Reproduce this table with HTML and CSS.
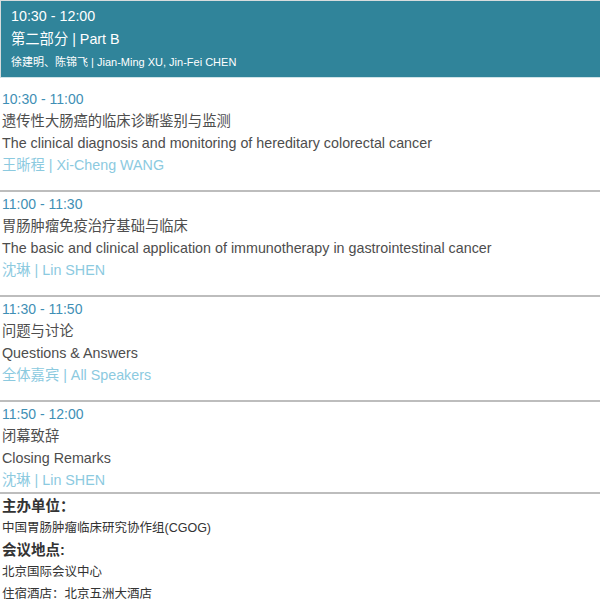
FILE: index.html
```html
<!DOCTYPE html>
<html>
<head>
<meta charset="utf-8">
<link rel="stylesheet" href="styles.css">
</head>
<body>
<div class="page">
  <div class="header">
    <div class="h-time">10:30 - 12:00</div>
    <div class="h-title">第二部分 | Part B</div>
    <div class="h-chairs">徐建明、陈锦飞 | Jian-Ming XU, Jin-Fei CHEN</div>
  </div>
  <div class="item">
    <div class="time">10:30 - 11:00</div>
    <div class="line">遗传性大肠癌的临床诊断鉴别与监测</div>
    <div class="line">The clinical diagnosis and monitoring of hereditary colorectal cancer</div>
    <div class="speaker">王晰程 | Xi-Cheng WANG</div>
  </div>
  <div class="sep"></div>
  <div class="item">
    <div class="time">11:00 - 11:30</div>
    <div class="line">胃肠肿瘤免疫治疗基础与临床</div>
    <div class="line">The basic and clinical application of immunotherapy in gastrointestinal cancer</div>
    <div class="speaker">沈琳 | Lin SHEN</div>
  </div>
  <div class="sep"></div>
  <div class="item">
    <div class="time">11:30 - 11:50</div>
    <div class="line">问题与讨论</div>
    <div class="line">Questions &amp; Answers</div>
    <div class="speaker">全体嘉宾 | All Speakers</div>
  </div>
  <div class="sep"></div>
  <div class="item last">
    <div class="time">11:50 - 12:00</div>
    <div class="line">闭幕致辞</div>
    <div class="line">Closing Remarks</div>
    <div class="speaker">沈琳 | Lin SHEN</div>
  </div>
  <div class="sep"></div>
  <div class="info">
    <div class="label">主办单位：</div>
    <div class="small">中国胃肠肿瘤临床研究协作组(CGOG)</div>
    <div class="label">会议地点:</div>
    <div class="small">北京国际会议中心</div>
    <div class="small">住宿酒店：北京五洲大酒店</div>
  </div>
</div>
</body>
</html>
```
FILE: styles.css
```css
html, body {
  margin: 0;
  padding: 0;
  background: #ffffff;
}
body {
  font-family: "Liberation Sans", Arial, "Noto Sans CJK SC", sans-serif;
  color: #555555;
}
.page {
  width: 600px;
}
.header {
  background: #30849a;
  color: #ffffff;
  border-top: 1px solid #d8dcdd;
  border-left: 1px solid #d8dcdd;
  border-bottom: 1px solid #cfe3e8;
  padding: 4px 0 5px 10px;
  height: 67px;
}
.h-time {
  font-size: 14.3px;
  line-height: 23px;
}
.h-title {
  font-size: 14.3px;
  line-height: 23px;
}
.h-chairs {
  font-size: 11px;
  line-height: 23px;
}
.item {
  padding: 10px 0 14px 2px;
  font-size: 14.3px;
  line-height: 22px;
}
.sep + .item {
  padding-top: 1px;
}
.item.last {
  padding-bottom: 1px;
}
.time {
  color: #3f8fb5;
  font-size: 14px;
}
.line {
  color: #4d4d4d;
}
.speaker {
  color: #8ccadf;
}
.sep {
  height: 2px;
  background: #bdbdbd;
}
.info {
  padding: 1px 0 0 2px;
  color: #333333;
}
.label {
  font-size: 14.5px;
  font-weight: bold;
  line-height: 22px;
}
.small {
  font-size: 12.5px;
  line-height: 22px;
}
```
